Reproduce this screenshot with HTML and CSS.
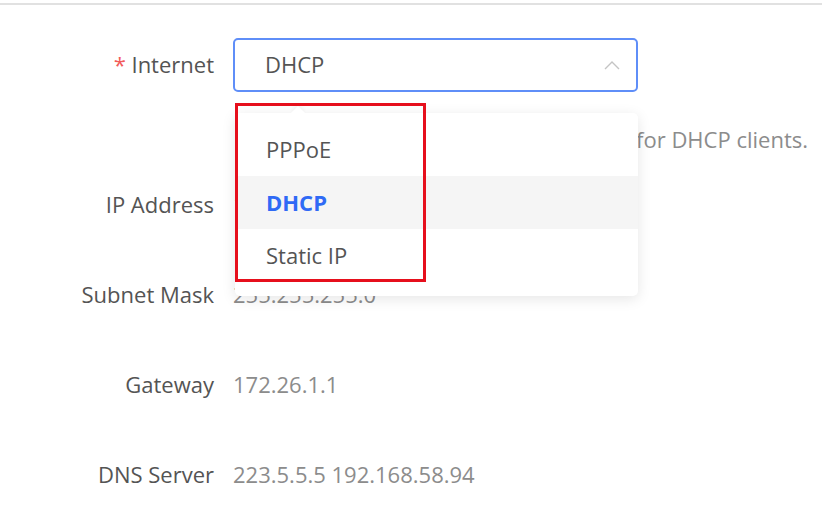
FILE: index.html
```html
<!DOCTYPE html>
<html lang="en">
<head>
  <meta charset="UTF-8">
  <meta name="viewport" content="width=device-width, initial-scale=1.0">
  <title>Internet Settings</title>
  <link rel="stylesheet" href="styles.css">
</head>
<body>
  <div class="page">
    <div class="form">
      <div class="row row-select">
        <label class="label"><span class="req">*</span> Internet</label>
        <div class="select-wrap">
          <div class="select">
            <span class="select-value">DHCP</span>
            <svg class="chevron" viewBox="0 0 16 10" xmlns="http://www.w3.org/2000/svg">
              <path d="M1 9 L8 2 L15 9" fill="none" stroke="#c4c4c4" stroke-width="1.4"/>
            </svg>
          </div>
          <div class="dropdown">
            <ul class="options">
              <li class="option">PPPoE</li>
              <li class="option active">DHCP</li>
              <li class="option">Static IP</li>
            </ul>
          </div>
          <div class="highlight"></div>
        </div>
      </div>
      <div class="row row-help">
        <span class="label"></span>
        <div class="help-box">
          <span class="help">IP address is assigned automatically for DHCP clients.</span>
        </div>
      </div>
      <div class="row">
        <span class="label">IP Address</span>
        <span class="value">172.26.1.104</span>
      </div>
      <div class="row">
        <span class="label">Subnet Mask</span>
        <span class="value">255.255.255.0</span>
      </div>
      <div class="row">
        <span class="label">Gateway</span>
        <span class="value">172.26.1.1</span>
      </div>
      <div class="row">
        <span class="label">DNS Server</span>
        <span class="value">223.5.5.5 192.168.58.94</span>
      </div>
    </div>
  </div>
</body>
</html>
```

FILE: styles.css
```css
body, html {
  margin: 0;
  padding: 0;
  background: #fff;
  font-family: 'Open Sans', 'Noto Sans', sans-serif;
  overflow: hidden;
}
.page {
  margin-top: 3px;
  border-top: 2px solid #e1e1e1;
  height: 515px;
}
.form {
  padding-top: 31px;
}
.row {
  display: grid;
  grid-template-columns: 214px 405px;
  column-gap: 19px;
  align-items: center;
  height: 90px;
  font-size: 22px;
}
.row-select {
  height: 54px;
  margin-top: 2px;
}
.row-select .label {
  margin-top: -3px;
}
.row-help {
  grid-template-columns: 214px 575px;
  height: 26px;
  margin-top: 32px;
  margin-bottom: 9px;
}
.label {
  text-align: right;
  color: #545454;
}
.req {
  color: #f25a5a;
}
.value {
  color: #8c8c8c;
}
.help-box {
  display: flex;
  justify-content: flex-end;
}
.help {
  color: #8c8c8c;
  white-space: nowrap;
}
.select-wrap {
  position: relative;
  height: 54px;
}
.select {
  box-sizing: border-box;
  height: 54px;
  border: 2px solid #5f8ef8;
  border-radius: 5px;
  display: flex;
  align-items: center;
  justify-content: space-between;
  padding: 0 16px 0 30px;
  color: #545454;
}
.select-value {
  margin-top: -2px;
}
.chevron {
  width: 16px;
  height: 10px;
}
.dropdown {
  position: absolute;
  top: 75px;
  left: 2px;
  width: 403px;
  height: 183px;
  box-sizing: border-box;
  background: #fff;
  border-radius: 5px;
  box-shadow: 0 3px 14px rgba(0, 0, 0, 0.1);
  padding-top: 10px;
  z-index: 10;
}
.dropdown::before {
  content: "";
  position: absolute;
  top: -5px;
  left: 58px;
  width: 10px;
  height: 10px;
  background: #fff;
  transform: rotate(45deg);
  box-shadow: -2px -2px 4px rgba(0, 0, 0, 0.04);
}
.options {
  list-style: none;
  margin: 0;
  padding: 0;
  position: relative;
}
.option {
  height: 53px;
  line-height: 53px;
  padding-left: 31px;
  color: #545454;
}
.option.active {
  background: #f5f5f5;
  color: #2f6af5;
  font-weight: bold;
}
.highlight {
  position: absolute;
  top: 65px;
  left: 2px;
  width: 191px;
  height: 179px;
  box-sizing: border-box;
  border: 3px solid #e60f1c;
  z-index: 20;
}
```
